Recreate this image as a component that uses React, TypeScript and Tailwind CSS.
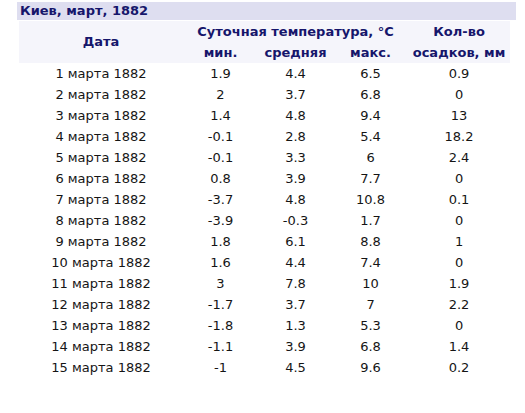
const rows: [string, string, string, string, string][] = [
  ['1 марта 1882', '1.9', '4.4', '6.5', '0.9'],
  ['2 марта 1882', '2', '3.7', '6.8', '0'],
  ['3 марта 1882', '1.4', '4.8', '9.4', '13'],
  ['4 марта 1882', '-0.1', '2.8', '5.4', '18.2'],
  ['5 марта 1882', '-0.1', '3.3', '6', '2.4'],
  ['6 марта 1882', '0.8', '3.9', '7.7', '0'],
  ['7 марта 1882', '-3.7', '4.8', '10.8', '0.1'],
  ['8 марта 1882', '-3.9', '-0.3', '1.7', '0'],
  ['9 марта 1882', '1.8', '6.1', '8.8', '1'],
  ['10 марта 1882', '1.6', '4.4', '7.4', '0'],
  ['11 марта 1882', '3', '7.8', '10', '1.9'],
  ['12 марта 1882', '-1.7', '3.7', '7', '2.2'],
  ['13 марта 1882', '-1.8', '1.3', '5.3', '0'],
  ['14 марта 1882', '-1.1', '3.9', '6.8', '1.4'],
  ['15 марта 1882', '-1', '4.5', '9.6', '0.2'],
];

export default function App() {
  return (
    <div className="w-[525px] h-[413px] bg-white pt-[2px] font-['DejaVu_Sans',Verdana,sans-serif] text-[13px]">
      <div className="ml-[17px] w-[499px] h-[18px] bg-[#dedef0] px-[3px] text-[13px] font-bold leading-[18px] text-[#16166b]">
        Киев, март, 1882
      </div>
      <table className="ml-[19px] mt-[1px] w-[491px] border-collapse table-fixed">
        <colgroup>
          <col className="w-[164px]" />
          <col className="w-[75px]" />
          <col className="w-[75px]" />
          <col className="w-[75px]" />
          <col className="w-[102px]" />
        </colgroup>
        <thead className="bg-[#f5f5fb] text-[#16166b] font-bold">
          <tr className="h-[21px]">
            <th rowSpan={2} className="text-center align-middle">Дата</th>
            <th colSpan={3} className="text-center leading-[21px]">Суточная температура, °C</th>
            <th className="text-center leading-[21px]">Кол-во</th>
          </tr>
          <tr className="h-[21px]">
            <th className="text-center leading-[21px]">мин.</th>
            <th className="text-center leading-[21px]">средняя</th>
            <th className="text-center leading-[21px]">макс.</th>
            <th className="text-center leading-[21px] whitespace-nowrap">осадков, мм</th>
          </tr>
        </thead>
        <tbody className="text-[#151515]">
          {rows.map((r) => (
            <tr key={r[0]} className="h-[21px]">
              {r.map((c, i) => (
                <td key={i} className="text-center leading-[21px] p-0">
                  {c}
                </td>
              ))}
            </tr>
          ))}
        </tbody>
      </table>
    </div>
  );
}
